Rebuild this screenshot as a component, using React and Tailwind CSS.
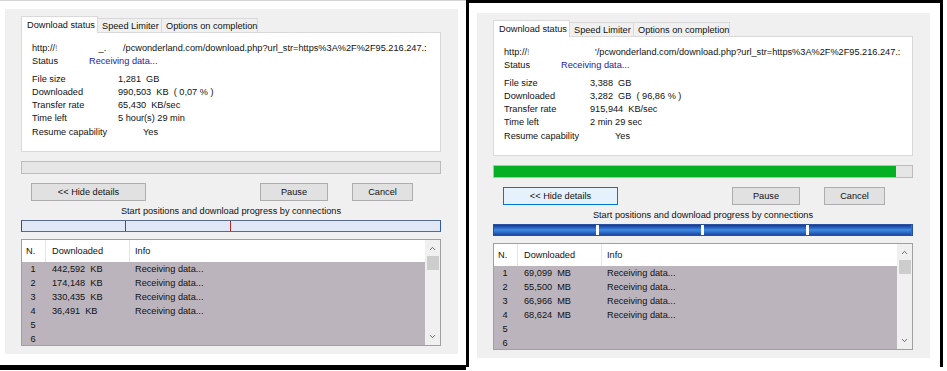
import React from 'react';
import { ChevronUp, ChevronDown } from 'lucide-react';

const windows = [
    {
        pre: '_.',
        tail: '/pcwonderland.com/download.php?url_str=https%3A%2F%2F95.216.247.:',
        size: '1,281  GB',
        downloaded: '990,503  KB  ( 0,07 % )',
        rate: '65,430  KB/sec',
        left: '5 hour(s) 29 min',
        percent: 0,
        focused: false,
        rows: ['442,592  KB', '174,148  KB', '330,435  KB', '36,491  KB'],
    },
    {
        pre: '',
        tail: '\'/pcwonderland.com/download.php?url_str=https%3A%2F%2F95.216.247.:',
        size: '3,388  GB',
        downloaded: '3,282  GB  ( 96,86 % )',
        rate: '915,944  KB/sec',
        left: '2 min 29 sec',
        percent: 96.2,
        focused: true,
        rows: ['69,099  MB', '55,500  MB', '66,966  MB', '68,624  MB'],
    },
];

const InfoRow = ({ label, value, width = 'w-[86px]', className = '' }) => (
    <div className={`flex h-[13px] leading-[13px] ${className}`}>
        <span className={`${width} shrink-0`}>{label}</span>
        <span className="whitespace-pre">{value}</span>
    </div>
);

const DownloadWindow = ({ d }) => {
    const done = d.percent > 0;

    return (
        <div className="w-[453px] h-[345px] bg-[#f0f0f0] flex flex-col pl-[16px] pr-[17px] pt-[7px]">
            {/* tabs */}
            <div className="flex items-end h-[17px] relative z-10 whitespace-nowrap">
                <div className="w-[77px] h-[17px] px-[5px] leading-[16px] bg-white border border-b-0 border-[#d9d9d9]">
                    Download status
                </div>
                <div className="w-[64px] h-[15px] px-[4px] leading-[14px] border border-b-0 border-l-0 border-[#d9d9d9]">
                    Speed Limiter
                </div>
                <div className="w-[96px] h-[15px] px-[4px] leading-[14px] border border-b-0 border-l-0 border-[#d9d9d9]">
                    Options on completion
                </div>
            </div>

            <div className="h-[120px] -mt-px bg-white border border-[#d9d9d9] pl-[10px] pt-[9px]">
                <div className="flex h-[13px] leading-[13px] whitespace-pre">
                    <span className="w-[91px] shrink-0">http://<span className="text-[#888]">!</span><span className="ml-[41px]">{d.pre}</span></span>
                    <span>{d.tail}</span>
                </div>
                <InfoRow
                    label="Status"
                    width="w-[57px]"
                    value={<span className="text-[#1c22a8]">Receiving data...</span>}
                />
                <InfoRow label="File size" value={d.size} className="mt-[5px]" />
                <InfoRow label="Downloaded" value={d.downloaded} />
                <InfoRow label="Transfer rate" value={d.rate} />
                <InfoRow label="Time left" value={d.left} />
                <InfoRow label="Resume capability" value="Yes" width="w-[111px]" className="mt-[1px]" />
            </div>

            {/* main progress */}
            <div className="mt-[9px] h-[13px] border border-[#bcbcbc] bg-[#e6e6e6] flex">
                {done && <div className="h-full bg-[#06b025]" style={{ width: `${d.percent}%` }} />}
            </div>

            {/* buttons */}
            <div className="mt-[9px] flex h-[18px]">
                <button
                    className={`ml-[10px] w-[115px] h-[18px] border leading-[16px] ${
                        d.focused ? 'bg-[#e5f1fb] border-[#0078d7]' : 'bg-[#e1e1e1] border-[#adadad]'
                    }`}
                >
                    {'<< Hide details'}
                </button>
                <button className="ml-[114px] w-[68px] h-[18px] border border-[#adadad] bg-[#e1e1e1] leading-[16px]">
                    Pause
                </button>
                <button className="ml-[24px] w-[61px] h-[18px] border border-[#adadad] bg-[#e1e1e1] leading-[16px]">
                    Cancel
                </button>
            </div>

            <div className="mt-[4px] h-[13px] leading-[13px] text-center">
                Start positions and download progress by connections
            </div>

            {/* connections bar */}
            {done ? (
                <div className="mt-[2px] h-[12px] flex border border-[#2a4f9c] bg-gradient-to-b from-[#1b3696] via-[#3f8be2] to-[#1d47a6]">
                    <div className="flex-1" />
                    <div className="w-[3px] bg-white" />
                    <div className="flex-1" />
                    <div className="w-[3px] bg-white" />
                    <div className="flex-1" />
                    <div className="w-[3px] bg-white" />
                    <div className="flex-1 border-r border-[#b04060]" />
                </div>
            ) : (
                <div className="mt-[2px] h-[12px] flex border border-[#5a6a8c] border-l-[#8a3030] border-r-[#2f5aa8] bg-[#e0e8f8]">
                    <div className="w-[104px] border-r border-[#b02828]" />
                    <div className="w-[105px] border-r border-[#b02828]" />
                    <div className="flex-1" />
                </div>
            )}

            {/* connections table */}
            <div className="mt-[7px] h-[107px] border border-[#a0a0a0] flex bg-[#bcb4bd]">
                <div className="flex-1 flex flex-col">
                    <div className="h-[22px] bg-white flex leading-[22px]">
                        <div className="w-[24px] pl-[4px] border-r border-[#e5e5e5]">N.</div>
                        <div className="w-[84px] pl-[6px] border-r border-[#e5e5e5]">Downloaded</div>
                        <div className="pl-[5px]">Info</div>
                    </div>
                    {[0, 1, 2, 3, 4, 5].map((i) => (
                        <div key={i} className="h-[14px] leading-[14px] flex">
                            <div className="w-[24px] text-center pr-[2px]">{i + 1}</div>
                            <div className="w-[84px] pl-[6px] whitespace-pre">{d.rows[i] || ''}</div>
                            <div className="pl-[5px]">{d.rows[i] ? 'Receiving data...' : ''}</div>
                        </div>
                    ))}
                </div>
                <div className="w-[15px] bg-[#f0f0f0] flex flex-col items-center">
                    <ChevronUp size={9} strokeWidth={2.5} className="mt-[4px] text-[#606060]" />
                    <div className="mt-[3px] w-[12px] h-[14px] bg-[#cdcdcd]" />
                    <ChevronDown size={9} strokeWidth={2.5} className="mt-auto mb-[4px] text-[#606060]" />
                </div>
            </div>
        </div>
    );
};

export default function App() {
    return (
        <div className="w-[947px] h-[371px] bg-white flex overflow-hidden text-[9.2px] text-[#111] font-['Liberation_Sans',Arial,sans-serif]">
            <div className="w-[466px] h-[370px] shrink-0 border-t border-b-[5px] border-t-[#d4d4d4] border-b-black">
                <div className="ml-[5px] mt-[8px]">
                    <DownloadWindow d={windows[0]} />
                </div>
            </div>
            <div className="w-[477px] h-[367px] shrink-0 border-[3px] border-b-0 border-black">
                <div className="ml-[8px] mt-[10px]">
                    <DownloadWindow d={windows[1]} />
                </div>
            </div>
        </div>
    );
}
